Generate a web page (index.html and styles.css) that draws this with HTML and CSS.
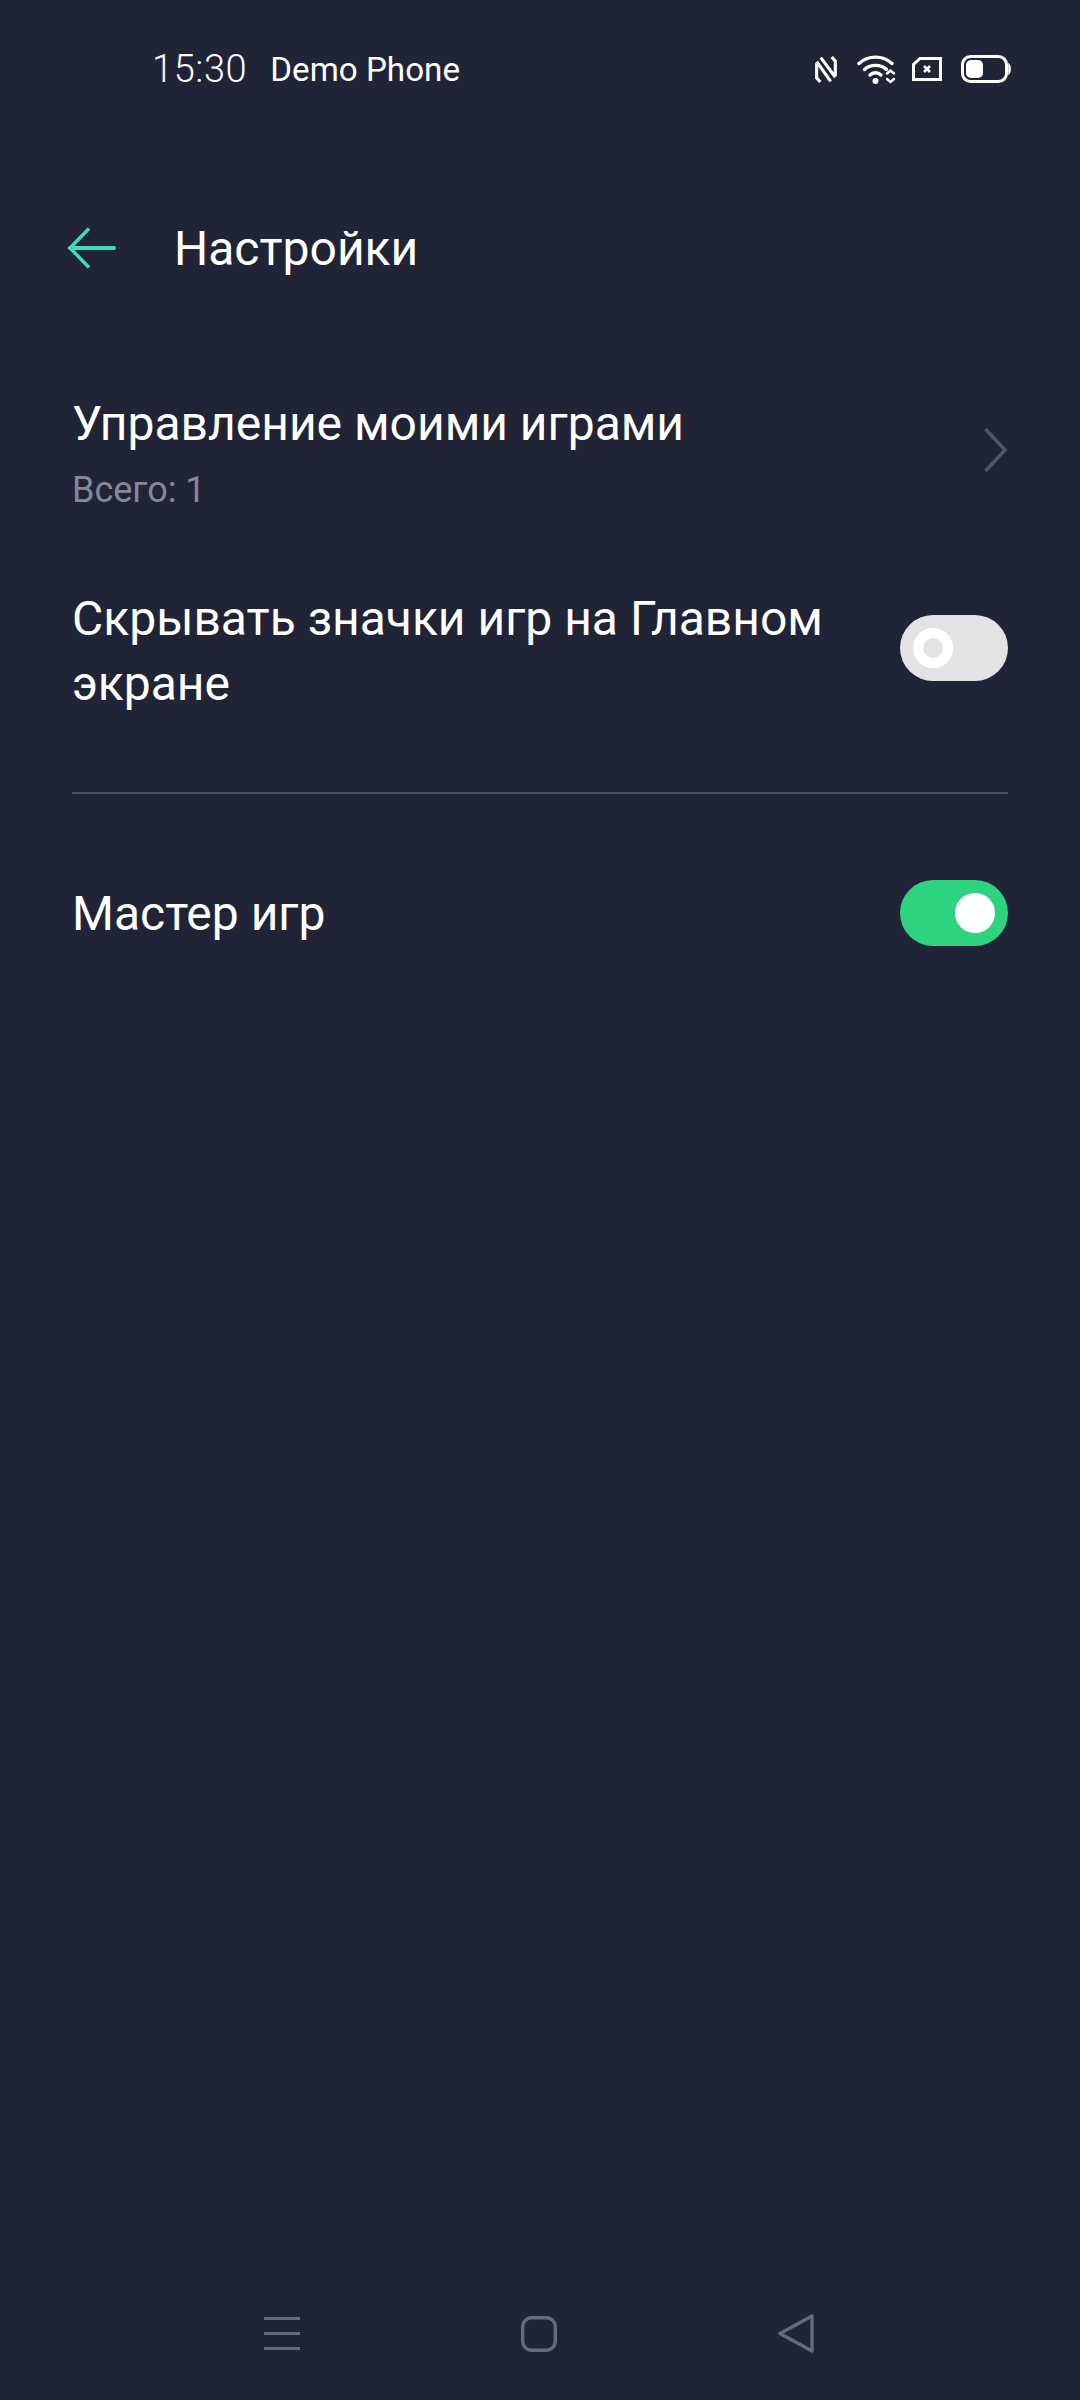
FILE: index.html
```html
<!DOCTYPE html>
<html lang="ru">
<head>
<meta charset="utf-8">
<title>Настройки</title>
<link rel="stylesheet" href="styles.css">
</head>
<body>
<div class="screen">
  <div class="status">
    <div class="status-left">
      <span class="time">15:30</span>
      <span class="carrier">Demo Phone</span>
    </div>
    <div class="status-icons">
      <svg class="ic-nfc" width="22" height="27" viewBox="0 0 21 26" fill="none" stroke="#fff" stroke-width="3"><path d="M1.500 7V21L5 25M1.500 5.500L15 24.500M5.500 1.500L19.500 20.500M19.500 19V5L16 1"/></svg>
      <svg class="ic-wifi" width="40" height="30" viewBox="0 0 40 30" fill="none" stroke="#fff" stroke-linecap="round"><path stroke-width="3.400" d="M2 9.500C11 1 26 1 35 9.500"/><path stroke-width="3.400" d="M7.500 15.500C13 10 24 10 29.500 15.500"/><path stroke-width="3.400" d="M13 21C16 18 21 18 24 21"/><circle cx="18.500" cy="27" r="3" fill="#fff" stroke="none"/><path stroke-width="2.400" d="M30 19.500L33.500 16.500L37 19.500M30 25L33.500 28L37 25"/></svg>
      <svg class="ic-sim" width="30" height="24" viewBox="0 0 30 24" fill="none"><path d="M8 1.500H28.500V22.500H1.500V7.500Z" stroke="#fff" stroke-width="3"/><path d="M12 9L18 15M18 9L12 15" stroke="#fff" stroke-width="2.600"/></svg>
      <svg class="ic-batt" width="50" height="28" viewBox="0 0 50 28" fill="none"><rect x="1.500" y="1.500" width="44" height="25" rx="8" stroke="#fff" stroke-width="3"/><rect x="5" y="5" width="17" height="18" rx="5" fill="#fff"/><path d="M48 9.500C49.500 11 49.500 17 48 18.500Z" fill="#fff" stroke="#fff" stroke-width="1.500"/></svg>
    </div>
  </div>

  <header class="appbar">
    <svg class="back" width="50" height="42" viewBox="0 0 50 42" fill="none" stroke="#3fdcb8" stroke-width="3.400"><path d="M22 1.500L3 21L22 40.500"/><path d="M3 21H47" stroke-width="4" stroke-linecap="round"/></svg>
    <h1 class="title">Настройки</h1>
  </header>

  <section class="list">
    <div class="row row-nav">
      <div class="row-text">
        <div class="label">Управление моими играми</div>
        <div class="sub">Всего: 1</div>
      </div>
      <svg class="chevron" width="24" height="46" viewBox="0 0 24 46" fill="none" stroke="#50556a" stroke-width="3.400"><path d="M1.500 2L21 23L1.500 44"/></svg>
    </div>
    <div class="row row-hide">
      <div class="label label-wrap">Скрывать значки игр на Главном экране</div>
      <div class="toggle toggle-off"><span class="knob"></span></div>
    </div>
    <div class="divider"></div>
    <div class="row row-master">
      <div class="label">Мастер игр</div>
      <div class="toggle toggle-on"><span class="knob"></span></div>
    </div>
  </section>

  <nav class="navbar">
    <svg width="36" height="33" viewBox="0 0 36 33" fill="none" stroke="#666a7b" stroke-width="3.200"><path d="M0 1.500H36M0 16.500H36M0 31.500H36"/></svg>
    <svg width="36" height="36" viewBox="0 0 36 36" fill="none" stroke="#666a7b" stroke-width="3.400"><rect x="1.700" y="1.700" width="32.600" height="32.600" rx="9"/></svg>
    <svg width="36" height="39" viewBox="0 0 36 39" fill="none" stroke="#666a7b" stroke-width="3.400" stroke-linejoin="round"><path d="M34 2L2 19.500L34 37Z"/></svg>
  </nav>
</div>
</body>
</html>
```
FILE: styles.css
```css
* { box-sizing: border-box; }
html, body { margin: 0; padding: 0; }
body { background: #212437; font-family: Roboto, "Noto Sans", sans-serif; color: #fff; }
.screen { width: 1080px; height: 2400px; display: flex; flex-direction: column; background: #212437; position: relative; }

.status { height: 140px; display: flex; justify-content: space-between; align-items: flex-start; padding: 49px 69px 0 152px; }
.status-left { display: flex; align-items: baseline; gap: 23px; line-height: 40px; }
.time { font-size: 38px; font-weight: 300; letter-spacing: .6px; }
.carrier { font-size: 33.200px; position: relative; top: -1px; }
.status-icons { display: flex; align-items: center; height: 38px; margin-top: 1px; }
.ic-nfc { margin-right: 20px; }
.ic-wifi { margin-right: 15px; }
.ic-sim { margin-right: 19px; }

.appbar { height: 214px; display: flex; align-items: flex-start; padding: 87px 0 0 67px; }
.back { flex: none; }
.title { margin: -6px 0 0 57px; font-size: 48px; font-weight: 400; line-height: 56px; }

.list { display: flex; flex-direction: column; padding: 0 72px; }
.row { display: flex; align-items: center; justify-content: space-between; }
.row-nav { height: 192px; }
.row-text { padding-top: 5px; }
.row-hide { height: 204px; }
.row-master { height: 238px; }
.label { font-size: 48px; line-height: 65px; }
.label-wrap { width: 770px; margin-top: 6px; }
.sub { font-size: 36px; line-height: 48px; margin-top: 10px; color: #858896; }
.divider { height: 2px; background: #4a4d60; margin-top: 42px; }

.toggle { width: 108px; height: 66px; border-radius: 33px; display: flex; align-items: center; flex: none; }
.toggle-off { background: #e3e3e3; padding-left: 13px; }
.toggle-on { background: #2ed37f; justify-content: flex-end; padding-right: 13px; }
.knob { width: 40px; height: 40px; border-radius: 50%; background: #fff; }
.toggle-off .knob { background: transparent; border: 10px solid #fff; }

.navbar { position: absolute; left: 264px; top: 2314px; width: 550px; display: flex; align-items: center; justify-content: space-between; }
```
